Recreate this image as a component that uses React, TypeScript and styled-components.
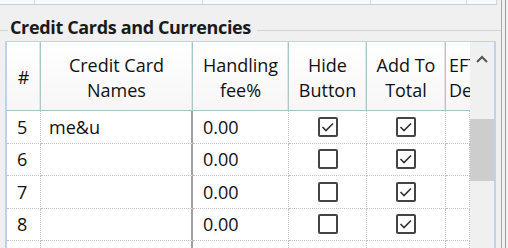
import React from "react";
import styled, { createGlobalStyle } from "styled-components";

const Global = createGlobalStyle`
  html, body { margin: 0; padding: 0; background: #f0f0f0; overflow: hidden; }
  * { box-sizing: border-box; }
`;

const Page = styled.div`
  display: flex;
  width: 508px;
  height: 248px;
  overflow: hidden;
  background: #f0f0f0;
  font-family: "Open Sans", "Noto Sans", sans-serif;
  color: #111;
`;

const Main = styled.div`
  width: 501px;
  flex: none;
  display: flex;
  flex-direction: column;
  overflow: hidden;
`;

const FrameLine = styled.div<{ $color: string }>`
  width: 1px;
  flex: none;
  background: ${(p) => p.$color};
`;

const FrameGap = styled.div<{ $w: number }>`
  width: ${(p) => p.$w}px;
  flex: none;
`;

const TopStrip = styled.div`
  display: grid;
  flex: none;
  grid-template-columns: 35px 168px 168px 96px 30px;
  height: 5px;
  width: 497px;
  border-bottom: 1px solid #bfd0e2;
`;

const TopCell = styled.div`
  background: #f8fafc;
  border-right: 1px solid #c9d7e6;
`;

const GroupHeader = styled.div`
  display: flex;
  flex: none;
  height: 24px;
  margin-top: 10px;
`;

const GroupLine = styled.div<{ $w?: number }>`
  height: 1px;
  margin-top: 15px;
  background: #d3d3d3;
  ${(p) => (p.$w ? `width: ${p.$w}px; flex: none;` : "flex: 1;")}
`;

const Title = styled.div`
  font-weight: 700;
  font-size: 18px;
  line-height: 24px;
  color: #1a1a1a;
  padding: 0 6px 0 2px;
  white-space: nowrap;
  letter-spacing: -0.35px;
`;

const GroupBody = styled.div`
  display: flex;
  flex: none;
  margin-top: 2px;
  padding-left: 5px;
`;

const Grid = styled.div`
  display: grid;
  flex: none;
  grid-template-columns: 34px 152px 96px 78px 79px 24px 24px;
  grid-template-rows: 69px repeat(5, 32.5px);
  border-top: 1px solid #bcd3ea;
  border-left: 2px solid #bcd3ea;
  border-right: 2px solid #bcd3ea;
  background: #fff;
  width: 491px;
`;

const HeaderCell = styled.div<{ $left?: boolean; $last?: boolean }>`
  display: flex;
  align-items: center;
  justify-content: ${(p) => (p.$left ? "flex-start" : "center")};
  text-align: ${(p) => (p.$left ? "left" : "center")};
  padding: 3px 0 0 ${(p) => (p.$left ? "3px" : "0")};
  font-size: 18px;
  line-height: 25px;
  white-space: nowrap;
  overflow: hidden;
  background: linear-gradient(#ffffff, #f6f6f6);
  border-bottom: 1px solid #a3c6c6;
  border-right: ${(p) => (p.$last ? "none" : "1px solid #a9c8c8")};
  box-shadow: ${(p) => (p.$last ? "none" : "inset -1px 0 0 #e4e4e4")};
`;

const BodyCell = styled.div<{ $pad?: number; $strong?: boolean; $center?: boolean }>`
  display: flex;
  align-items: center;
  justify-content: ${(p) => (p.$center ? "center" : "flex-start")};
  padding-left: ${(p) => p.$pad ?? 0}px;
  font-size: 18px;
  line-height: 1;
  white-space: nowrap;
  overflow: hidden;
  border-bottom: 1px dotted #c2c2c2;
  border-right: ${(p) => (p.$strong ? "2px solid #a2a2a2" : "1px dotted #c2c2c2")};
`;

const Scrollbar = styled.div`
  grid-column: 7;
  grid-row: 1 / -1;
  background: #f0f0f0;
  display: flex;
  flex-direction: column;
`;

const ScrollButton = styled.div`
  height: 33px;
  flex: none;
  display: flex;
  align-items: center;
  justify-content: center;
`;

const Thumb = styled.div`
  flex: none;
  margin-top: 44px;
  height: 62px;
  background: #cdcdcd;
`;

const Box = styled.span`
  flex: none;
  width: 20px;
  height: 20px;
  border: 2px solid #444;
  border-radius: 2px;
  display: flex;
  align-items: center;
  justify-content: center;
  background: #fff;
`;

const Check: React.FC<{ checked: boolean }> = ({ checked }) => (
  <Box>
    {checked && (
      <svg width="16" height="16" viewBox="0 0 16 16">
        <path d="M2.5 8 L6 11.5 L13 4.5" fill="none" stroke="#333" strokeWidth="1.6" />
      </svg>
    )}
  </Box>
);

type Row = { n: string; name: string; fee: string; hide: boolean; add: boolean };

const rows: Row[] = [
  { n: "5", name: "me&u", fee: "0.00", hide: true, add: true },
  { n: "6", name: "", fee: "0.00", hide: false, add: true },
  { n: "7", name: "", fee: "0.00", hide: false, add: true },
  { n: "8", name: "", fee: "0.00", hide: false, add: true },
];

export default function App() {
  return (
    <Page>
      <Global />
      <Main>
        <TopStrip>
          <TopCell />
          <TopCell />
          <TopCell />
          <TopCell />
          <TopCell />
        </TopStrip>
        <GroupHeader>
          <GroupLine $w={8} />
          <Title>Credit Cards and Currencies</Title>
          <GroupLine />
        </GroupHeader>
        <GroupBody>
          <Grid>
            <HeaderCell>#</HeaderCell>
            <HeaderCell>
              Credit Card
              <br />
              Names
            </HeaderCell>
            <HeaderCell>
              Handling
              <br />
              fee%
            </HeaderCell>
            <HeaderCell>
              Hide
              <br />
              Button
            </HeaderCell>
            <HeaderCell>
              Add To
              <br />
              Total
            </HeaderCell>
            <HeaderCell $left $last>
              EFT
              <br />
              Debit
            </HeaderCell>
            <Scrollbar>
              <ScrollButton>
                <svg width="12" height="8" viewBox="0 0 12 8">
                  <path d="M1 7 L6 2 L11 7" fill="none" stroke="#555" strokeWidth="2" />
                </svg>
              </ScrollButton>
              <Thumb />
            </Scrollbar>
            {rows.map((r) => (
              <React.Fragment key={r.n}>
                <BodyCell $pad={10}>{r.n}</BodyCell>
                <BodyCell $pad={8} $strong>
                  {r.name}
                </BodyCell>
                <BodyCell $pad={10}>{r.fee}</BodyCell>
                <BodyCell $center>
                  <Check checked={r.hide} />
                </BodyCell>
                <BodyCell $center>
                  <Check checked={r.add} />
                </BodyCell>
                <BodyCell />
              </React.Fragment>
            ))}
            <BodyCell />
            <BodyCell $strong />
            <BodyCell />
            <BodyCell />
            <BodyCell />
            <BodyCell />
          </Grid>
        </GroupBody>
      </Main>
      <FrameLine $color="#a9a9a9" />
      <FrameGap $w={3} />
      <FrameLine $color="#a0a0a0" />
      <FrameGap $w={2} />
    </Page>
  );
}
